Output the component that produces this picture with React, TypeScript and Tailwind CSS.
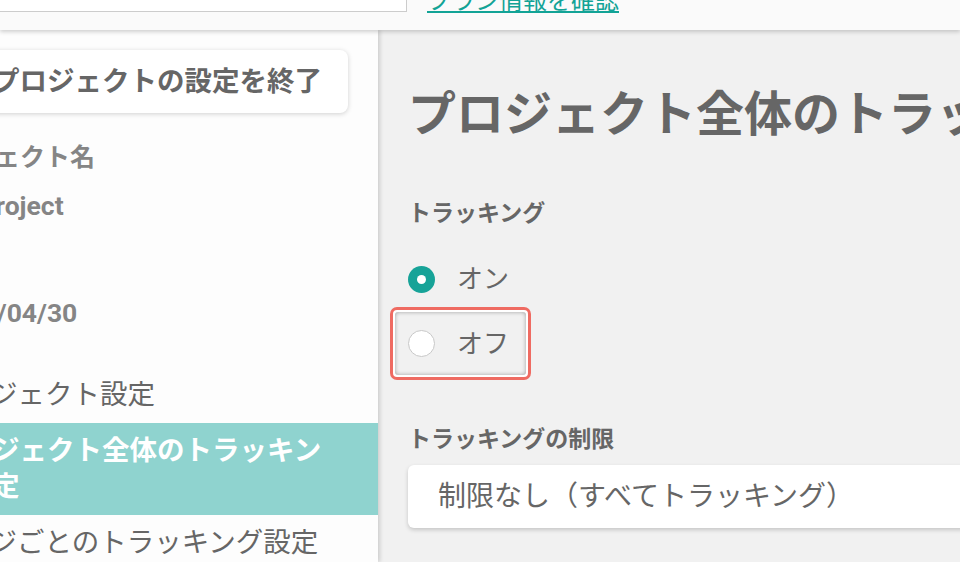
import React from 'react';

const font = "font-['Roboto','Noto_Sans_CJK_JP',sans-serif]";

function Radio({ checked }: { checked: boolean }) {
  return checked ? (
    <span className="flex h-[27px] w-[27px] shrink-0 items-center justify-center rounded-full bg-[#17a398]">
      <span className="h-[9px] w-[9px] rounded-full bg-white" />
    </span>
  ) : (
    <span className="h-[27px] w-[27px] shrink-0 rounded-full border border-[#c8c8c8] bg-white" />
  );
}

export default function App() {
  return (
    <div className={`relative flex h-[562px] w-[960px] flex-col overflow-hidden bg-[#f1f1f1] text-[#666] ${font}`}>
      {/* Header */}
      <div className="relative z-20 flex h-[30px] shrink-0 items-end bg-[#fafafa] shadow-[0_2px_4px_rgba(0,0,0,0.18)]">
        <div className="mb-[18px] flex items-end">
          <div className="ml-[-20px] h-[40px] w-[427px] border border-[#cccccc] bg-white" />
          <a className="ml-[20px] mb-[-2px] whitespace-nowrap text-[24px] leading-[26px] text-[#12a396] underline decoration-[1.5px] underline-offset-[2px]">
            プラン情報を確認
          </a>
        </div>
      </div>

      {/* Body */}
      <div className="flex min-h-0 flex-1">
        {/* Sidebar */}
        <aside className="relative z-10 flex w-[378px] shrink-0 flex-col overflow-hidden bg-[#fdfdfd] shadow-[2px_0_4px_rgba(0,0,0,0.15)]">
          <div className="ml-[-38px] mt-[20px] flex h-[63px] w-[386px] shrink-0 items-center rounded-[8px] bg-white pl-[30px] shadow-[0_1px_5px_rgba(0,0,0,0.18)]">
            <span className="whitespace-nowrap text-[27.5px] font-bold leading-none text-[#666]">
              プロジェクトの設定を終了
            </span>
          </div>

          <div className="ml-[-80px] mt-[29px] flex shrink-0 flex-col text-[#858585]">
            <div className="whitespace-nowrap text-[25px] font-bold leading-[32px]">プロジェクト名</div>
            <div className="ml-[8px] mt-[16px] whitespace-nowrap text-[26.5px] font-bold leading-[32px]">test project</div>
            <div className="mt-[27px] whitespace-nowrap text-[25px] font-bold leading-[32px]">作成日</div>
            <div className="ml-[16px] mt-[16px] whitespace-nowrap text-[26.5px] font-bold leading-[32px]">2024/04/30</div>
          </div>

          <nav className="mt-[38px] flex shrink-0 flex-col text-[27.5px] leading-[36px]">
            <div className="shrink-0 py-[10px] pr-[43px]">
              <div className="ml-[-65px] whitespace-nowrap text-[#666]">プロジェクト設定</div>
            </div>
            <div className="shrink-0 bg-[#8fd3cf] py-[10px] pr-[43px]">
              <div className="ml-[-63px] font-bold text-white">プロジェクト全体のトラッキング設定</div>
            </div>
            <div className="shrink-0 py-[10px] pr-[43px]">
              <div className="ml-[-65px] whitespace-nowrap text-[#666]">ページごとのトラッキング設定</div>
            </div>
          </nav>
        </aside>

        {/* Main */}
        <main className="flex min-w-0 flex-1 flex-col pl-[30px]">
          <h1 className="mt-[57px] shrink-0 whitespace-nowrap text-[48px] font-bold leading-[56px] text-[#666]">
            プロジェクト全体のトラッキング設定
          </h1>

          <div className="mt-[57px] shrink-0 text-[23px] font-bold leading-[28px] text-[#666]">トラッキング</div>

          <div className="mt-[36px] flex shrink-0 items-center gap-[22px]">
            <Radio checked />
            <span className="text-[26px] leading-[30px]">オン</span>
          </div>

          <div className="ml-[-18px] mt-[13px] h-[73px] w-[141px] shrink-0 rounded-[7px] border-[3px] border-[#ef6b62] bg-white p-[2px]">
            <div className="flex h-full items-center gap-[22px] rounded-[3px] bg-[#f1f1f1] pl-[13px] shadow-[inset_0_0_4px_rgba(0,0,0,0.35)]">
              <Radio checked={false} />
              <span className="text-[26px] leading-[30px]">オフ</span>
            </div>
          </div>

          <div className="mt-[46px] shrink-0 text-[23px] font-bold leading-[28px] text-[#666]">トラッキングの制限</div>

          <div className="mt-[11px] flex h-[63px] w-[600px] shrink-0 items-center rounded-[6px] bg-white pl-[30px] shadow-[0_2px_4px_rgba(0,0,0,0.18)]">
            <span className="whitespace-nowrap text-[28px] text-[#666]">制限なし（すべてトラッキング）</span>
          </div>
        </main>
      </div>
    </div>
  );
}
